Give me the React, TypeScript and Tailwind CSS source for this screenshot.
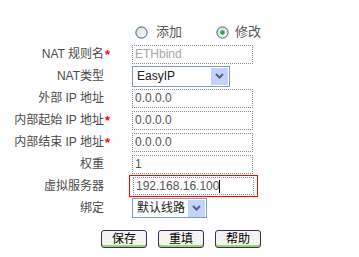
import { useState } from 'react'

const FONT = "font-['Liberation_Sans','Noto_Sans_CJK_SC',sans-serif]"

type Row = {
  label: string
  required?: boolean
  kind: 'text' | 'select'
  value: string
  width?: string
  disabled?: boolean
  focused?: boolean
}

const ROWS: Row[] = [
  { label: 'NAT 规则名', required: true, kind: 'text', value: 'ETHbind', disabled: true },
  { label: 'NAT类型', kind: 'select', value: 'EasyIP', width: 'w-[98px] h-[21px]' },
  { label: '外部 IP 地址', kind: 'text', value: '0.0.0.0' },
  { label: '内部起始 IP 地址', required: true, kind: 'text', value: '0.0.0.0' },
  { label: '内部结束 IP 地址', required: true, kind: 'text', value: '0.0.0.0' },
  { label: '权重', kind: 'text', value: '1' },
  { label: '虚拟服务器', kind: 'text', value: '192.168.16.100', focused: true },
  { label: '绑定', kind: 'select', value: '默认线路', width: 'w-[75px] h-[20px]' },
]

function Radio({ checked }: { checked: boolean }) {
  const id = checked ? 'rg1' : 'rg0'
  return (
    <svg width="13" height="13" viewBox="0 0 13 13" className="shrink-0">
      <defs>
        <linearGradient id={id} x1="0" y1="0" x2="1" y2="1">
          <stop offset="0" stopColor="#d8d8d2" />
          <stop offset="1" stopColor="#ffffff" />
        </linearGradient>
      </defs>
      <circle cx="6.5" cy="6.5" r="5.6" fill={`url(#${id})`} stroke="#2f5a8c" strokeWidth="1" />
      {checked && <circle cx="6.5" cy="6.5" r="2.2" fill="#2fa13a" />}
    </svg>
  )
}

function SelectBox({ value, width }: { value: string; width?: string }) {
  return (
    <div className={`${width} flex items-center justify-between border border-[#7f9db9] bg-white pl-[4px] pr-[1px]`}>
      <span className="text-[12px] leading-none text-[#222]">{value}</span>
      <span className="w-[17px] h-[17px] bg-[#c3d3fb] flex items-center justify-center">
        <svg width="9" height="6" viewBox="0 0 9 6">
          <path d="M1 1 L4.5 4.5 L8 1" fill="none" stroke="#4d6185" strokeWidth="2" />
        </svg>
      </span>
    </div>
  )
}

function TextBox({ value, disabled, focused }: { value: string; disabled?: boolean; focused?: boolean }) {
  const box = (
    <div className={`w-[121px] ${focused ? 'h-[18px]' : 'h-[19px]'} border border-dotted border-[#8a8a8a] bg-white flex items-center pl-[2px]`}>
      <span className={`text-[12px] leading-none ${disabled ? 'text-[#a8a8a8]' : 'text-[#555]'}`}>{value}</span>
      {focused && <span className="w-px h-[13px] bg-black" />}
    </div>
  )
  if (!focused) return box
  return <div className="-ml-[3px] border border-[#ff0000] px-[3px] py-px">{box}</div>
}

function Button({ children }: { children: string }) {
  return (
    <button className="w-[46px] h-[18px] border border-[#3d2b5c] rounded-[3px] bg-[#f3f3ef] shadow-[inset_0_-2px_0_#9ad66a] text-[12px] leading-none text-black flex items-center justify-center">
      {children}
    </button>
  )
}

export default function App() {
  const [mode] = useState<'add' | 'edit'>('edit')

  return (
    <div className={`w-[359px] h-[257px] bg-white ${FONT} pt-[21px]`}>
      {/* mode radios */}
      <div className="h-[22px] flex items-center pl-[135px]">
        <Radio checked={mode === 'add'} />
        <span className="ml-[8px] text-[13px] text-[#555]">添加</span>
        <span className="ml-[34px]"><Radio checked={mode === 'edit'} /></span>
        <span className="ml-[6px] text-[13px] text-[#555]">修改</span>
      </div>

      {/* fields */}
      {ROWS.map((r) => (
        <div key={r.label} className="h-[22px] grid grid-cols-[104px_28px_1fr] items-center">
          <span className="text-right text-[12px] text-[#4a4a4a] whitespace-nowrap">{r.label}</span>
          <span className="text-[13px] font-bold text-[#ff0000] pl-[1px] leading-none">{r.required ? '*' : ''}</span>
          <div className="flex">
            {r.kind === 'select'
              ? <SelectBox value={r.value} width={r.width} />
              : <TextBox value={r.value} disabled={r.disabled} focused={r.focused} />}
          </div>
        </div>
      ))}

      {/* actions */}
      <div className="mt-[11px] flex pl-[101px] gap-[11px]">
        <Button>保存</Button>
        <Button>重填</Button>
        <Button>帮助</Button>
      </div>
    </div>
  )
}
